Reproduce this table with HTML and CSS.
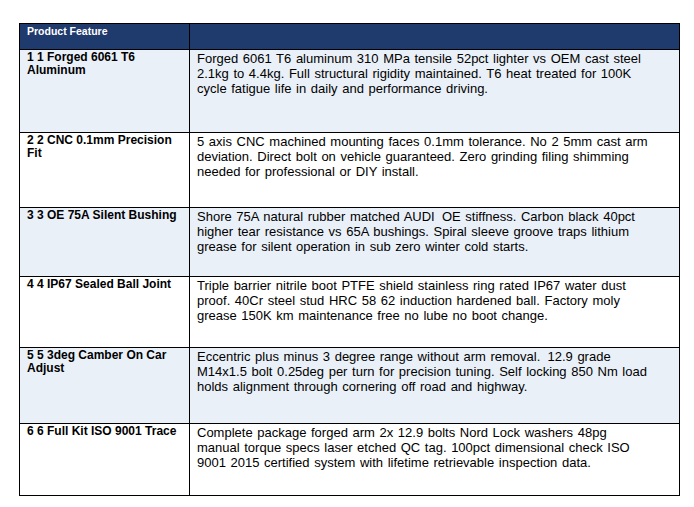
FILE: index.html
```html
<!DOCTYPE html>
<html>
<head>
<meta charset="utf-8">
<link rel="stylesheet" href="styles.css">
</head>
<body>
<table class="spec">
  <colgroup>
    <col class="c-feat">
    <col class="c-desc">
  </colgroup>
  <thead>
    <tr class="head">
      <th class="feat">Product Feature</th>
      <th class="desc"></th>
    </tr>
  </thead>
  <tbody>
    <tr class="row r1 alt">
      <td class="feat">1 1 Forged 6061 T6 Aluminum</td>
      <td class="desc">Forged 6061 T6 aluminum 310 MPa tensile 52pct lighter vs OEM cast steel<br>2.1kg to 4.4kg. Full structural rigidity maintained. T6 heat treated for 100K<br>cycle fatigue life in daily and performance driving.</td>
    </tr>
    <tr class="row r2">
      <td class="feat">2 2 CNC 0.1mm Precision Fit</td>
      <td class="desc">5 axis CNC machined mounting faces 0.1mm tolerance. No 2 5mm cast arm<br>deviation. Direct bolt on vehicle guaranteed. Zero grinding filing shimming<br>needed for professional or DIY install.</td>
    </tr>
    <tr class="row r3 alt">
      <td class="feat">3 3 OE 75A Silent Bushing</td>
      <td class="desc">Shore 75A natural rubber matched AUDI&thinsp; OE stiffness. Carbon black 40pct<br>higher tear resistance vs 65A bushings. Spiral sleeve groove traps lithium<br>grease for silent operation in sub zero winter cold starts.</td>
    </tr>
    <tr class="row r4">
      <td class="feat">4 4 IP67 Sealed Ball Joint</td>
      <td class="desc">Triple barrier nitrile boot PTFE shield stainless ring rated IP67 water dust<br>proof. 40Cr steel stud HRC 58 62 induction hardened ball. Factory moly<br>grease 150K km maintenance free no lube no boot change.</td>
    </tr>
    <tr class="row r5 alt">
      <td class="feat">5 5 3deg Camber On Car Adjust</td>
      <td class="desc">Eccentric plus minus 3 degree range without arm removal.&thinsp; 12.9 grade<br>M14x1.5 bolt 0.25deg per turn for precision tuning. Self locking 850 Nm load<br>holds alignment through cornering off road and highway.</td>
    </tr>
    <tr class="row r6">
      <td class="feat">6 6 Full Kit ISO 9001 Trace</td>
      <td class="desc">Complete package forged arm 2x 12.9 bolts Nord Lock washers 48pg<br>manual torque specs laser etched QC tag. 100pct dimensional check ISO<br>9001 2015 certified system with lifetime retrievable inspection data.</td>
    </tr>
  </tbody>
</table>
</body>
</html>
```
FILE: styles.css
```css
html, body {
  margin: 0;
  padding: 0;
  background: #ffffff;
}
body {
  padding: 23px 0 0 19px;
  font-family: "Liberation Sans", Arial, sans-serif;
  color: #000000;
}
.spec {
  border-collapse: collapse;
  width: 660px;
  table-layout: fixed;
}
.c-feat { width: 170px; }
.c-desc { width: 490px; }
.spec th, .spec td {
  border: 1px solid #000000;
  vertical-align: top;
  text-align: left;
}
.spec .feat {
  padding: 1px 6px 0 7px;
  font-weight: bold;
  font-size: 12px;
  line-height: 13px;
}
.spec .desc {
  padding: 1px 4px 0 7px;
  font-size: 13px;
  word-spacing: 1px;
  line-height: 15px;
  white-space: nowrap;
}
.head th {
  background: #1f3a6c;
  color: #ffffff;
  height: 24px;
  padding-top: 1px;
}
.head th.feat {
  font-size: 10.5px;
  line-height: 12px;
}
.alt td {
  background: #eaf0f8;
}
.r1 td { height: 81px; }
.r2 td { height: 73px; }
.r3 td { height: 67px; }
.r4 td { height: 69px; }
.r5 td { height: 74px; }
.r6 td { height: 70px; }
```
